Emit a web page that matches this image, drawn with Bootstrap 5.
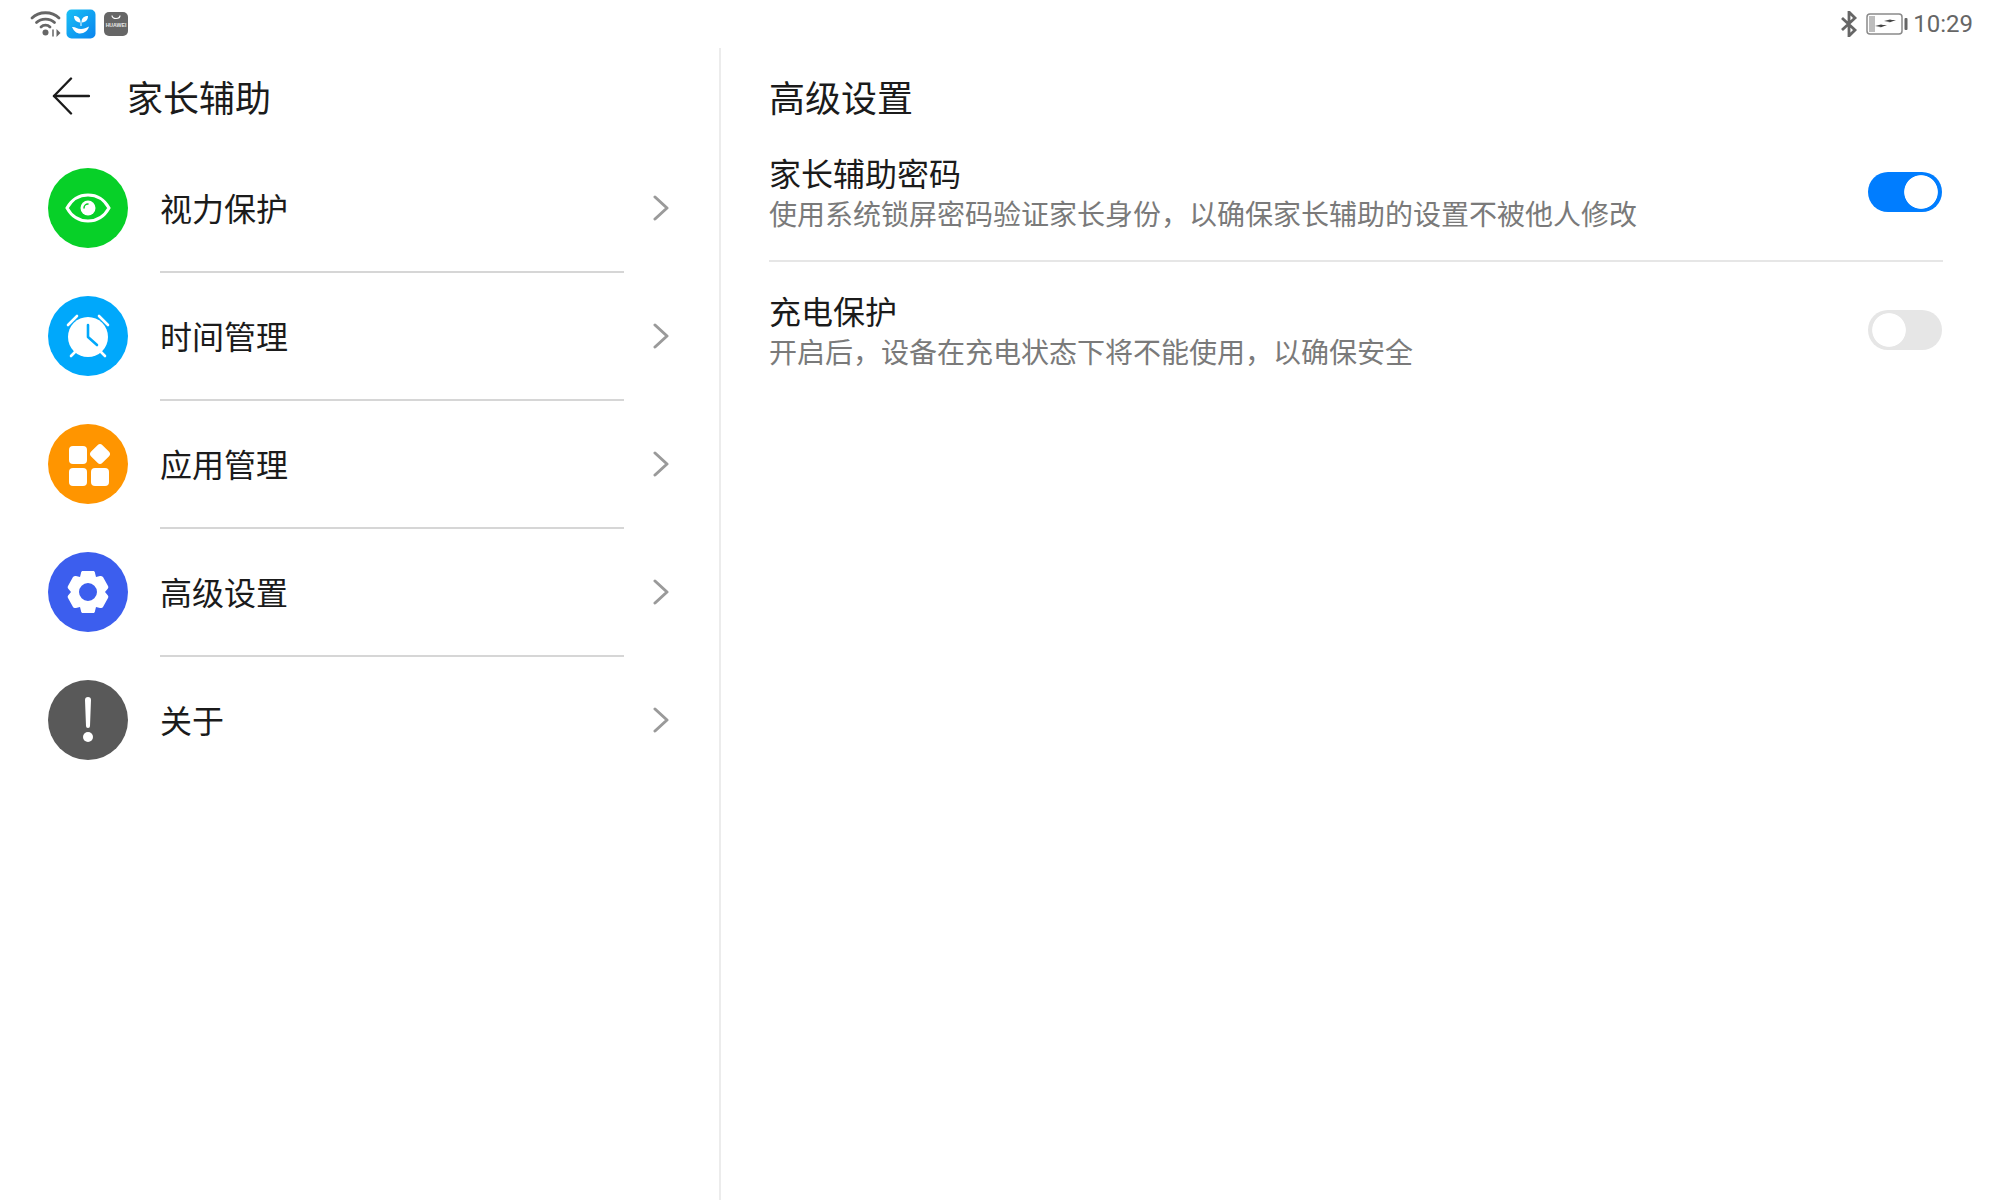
<!DOCTYPE html>
<html lang="zh-CN">
<head>
<meta charset="utf-8">
<title>家长辅助</title>
<link href="https://cdn.jsdelivr.net/npm/bootstrap@5.3.0/dist/css/bootstrap.min.css" rel="stylesheet">
<style>
html,body{height:100%;}
body{background:#fff;color:#1b1b1b;font-family:"Noto Sans CJK SC","Liberation Sans",sans-serif;overflow:hidden;}
.shell{height:1200px;width:2000px;}
.statusbar{height:48px;padding:0 27px 0 30px;color:#666;}
.clock{font-family:Roboto,sans-serif;font-size:24px;color:#666;line-height:48px;margin-left:5px;}
.panes{height:1152px;}
.pane-left{width:721px;border-right:2px solid #ececec;padding-left:48px;}
.pane-right{padding-left:48px;padding-right:57px;}
.head-row{height:97px;padding-bottom:1px;}
.back-ico{margin-left:4px;margin-right:37px;}
.head-title{font-size:36px;line-height:1;color:#1b1b1b;}
.menu-row{height:128px;align-items:flex-start;}
.menu-disc{width:80px;height:80px;border-radius:50%;flex:none;margin-top:23px;}
.disc-green{background:#07d028;}
.disc-sky{background:#00a8fb;}
.disc-amber{background:#ff9500;}
.disc-indigo{background:#3c5eee;}
.disc-slate{background:#595959;}
.menu-body{margin-left:32px;margin-right:29px;width:464px;border-bottom:2px solid #d6d6d6;height:128px;font-size:32px;line-height:1;}
.menu-row:last-child .menu-body{border-bottom:0;}
.chev{margin-top:50px;}
.menu-label{line-height:124px;height:124px;}
.set-row{border-bottom:2px solid #e6e6e6;}
.row-one{height:117px;padding-top:7px;}
.row-two{height:138px;padding-top:28px;border-bottom:0;}
.set-title{font-size:32px;line-height:40px;color:#1b1b1b;}
.set-sub{font-size:28px;line-height:42px;color:#7a7a7a;}
.hw-switch{appearance:none;-webkit-appearance:none;display:block;width:74px;height:40px;border-radius:20px;margin:20px 1px 0 0;border:0;flex:none;}
.hw-switch.is-on{background:radial-gradient(circle 17px at 53px 20px,#fff 16.4px,transparent 17.2px),#007dff;}
.hw-switch.is-off{background:radial-gradient(circle 17px at 21px 20px,#fff 16.4px,transparent 17.2px),#e6e6e6;}
</style>
</head>
<body>
<div class="shell d-flex flex-column">
  <div class="statusbar d-flex align-items-center justify-content-between">
    <div class="d-flex align-items-center">
      <svg width="32" height="28" viewBox="0 0 32 28" fill="none" stroke="#666" stroke-width="2.8" stroke-linecap="round">
        <path d="M2 8C9 1 22 1 29 8"/><path d="M6.500 12.500C11 8 20 8 24.500 12.500"/><path d="M11 17C13.500 14.500 17.500 14.500 20 17"/>
        <circle cx="15.500" cy="22.500" r="3" fill="#666" stroke="none"/>
        <path d="M23 20v6" stroke-width="1.500"/><path d="M26.500 19v8l4-4z" fill="#666" stroke="none"/>
      </svg>
      <svg class="ms-1" width="30" height="30" viewBox="0 0 30 30">
        <defs><linearGradient id="blu" x1="0" y1="0" x2="1" y2="1"><stop offset="0" stop-color="#19c0f5"/><stop offset="1" stop-color="#0a84ee"/></linearGradient></defs>
        <rect width="29" height="29" x="0.500" y="0.500" rx="5" fill="url(#blu)"/>
        <path d="M8 7c3.500 0 6 1.500 6.500 5.500V17h1v-4.500C16 8.500 18.500 7 22 7c0 3.500-2 6-6 6.500h-2C10 13 8 10.500 8 7z" fill="#fff"/>
        <path d="M6 18c3-.500 5 2 9 2 3 0 5-1 8-2.500-1 4-4.500 7-9 7-3 0-6-2-8-6.500z" fill="#fff"/>
      </svg>
      <svg class="ms-2" width="24" height="24" viewBox="0 0 24 24">
        <rect width="24" height="24" rx="5" fill="#666"/>
        <path d="M8 3.500c0 4 8 4 8 0" fill="none" stroke="#fff" stroke-width="1.200"/>
        <text x="12" y="15" text-anchor="middle" font-family="Liberation Sans, sans-serif" font-size="5.200" font-weight="700" fill="#e8e8e8">HUAWEI</text>
      </svg>
    </div>
    <div class="d-flex align-items-center">
      <svg width="18" height="26" viewBox="0 0 18 26" fill="none" stroke="#666" stroke-width="2.800" class="me-2">
        <path d="M2 7l13 12-6 6V1l6 6L2 19"/>
      </svg>
      <svg width="42" height="22" viewBox="0 0 42 22" fill="none">
        <rect x="1" y="1" width="35" height="20" rx="3" stroke="#8a8a8a" stroke-width="1.500"/>
        <rect x="3" y="3" width="6" height="16" fill="#bdbdbd"/>
        <rect x="38.500" y="5" width="3" height="12" rx="1" fill="#666"/>
        <path d="M9 13l8-2-2 1 6 0-8 3 2-1z M18 8l8-2-2 1 6 0-8 3 2-1z" fill="#444"/>
      </svg>
      <span class="clock">10:29</span>
    </div>
  </div>
  <div class="panes d-flex flex-grow-1">
    <div class="pane-left flex-shrink-0">
      <div class="head-row d-flex align-items-center">
        <svg class="back-ico" width="38" height="38" viewBox="0 0 38 38" fill="none" stroke="#1b1b1b" stroke-width="2.400" stroke-linecap="round" stroke-linejoin="round">
          <path d="M37 19H2"/><path d="M19 1.500L2 19l17 17.500"/>
        </svg>
        <span class="head-title">家长辅助</span>
      </div>
      <div>
        <div class="menu-row d-flex">
          <div class="menu-disc disc-green d-flex align-items-center justify-content-center">
            <svg width="46" height="30" viewBox="0 0 46 30" fill="none">
              <path d="M2 15C7 6 14 2 23 2s16 4 21 13c-5 9-12 13-21 13S7 24 2 15z" stroke="#fff" stroke-width="3"/>
              <circle cx="23" cy="15" r="7.500" fill="#fff"/>
              <path d="M19 15a4 4 0 0 1 4-4" stroke="#07d028" stroke-width="1.500" stroke-linecap="round"/>
            </svg>
          </div>
          <div class="menu-body"><div class="menu-label">视力保护</div></div>
          <svg class="chev" width="16" height="26" viewBox="0 0 16 26" fill="none" stroke="#9a9a9a" stroke-width="3" stroke-linecap="round" stroke-linejoin="round"><path d="M2 2l12 11L2 24"/></svg>
        </div>
        <div class="menu-row d-flex">
          <div class="menu-disc disc-sky d-flex align-items-center justify-content-center">
            <svg width="48" height="48" viewBox="0 0 48 48" fill="none">
              <circle cx="24" cy="25" r="20" fill="#fff"/>
              <path d="M24 13v12l9 8" stroke="#00a8fb" stroke-width="2.600" stroke-linecap="round" stroke-linejoin="round"/>
              <path d="M4 13l9-9M44 13l-9-9" stroke="#fff" stroke-width="2.600" stroke-linecap="round"/>
              <path d="M7 44l4-4M41 44l-4-4" stroke="#fff" stroke-width="2.600" stroke-linecap="round"/>
            </svg>
          </div>
          <div class="menu-body"><div class="menu-label">时间管理</div></div>
          <svg class="chev" width="16" height="26" viewBox="0 0 16 26" fill="none" stroke="#9a9a9a" stroke-width="3" stroke-linecap="round" stroke-linejoin="round"><path d="M2 2l12 11L2 24"/></svg>
        </div>
        <div class="menu-row d-flex">
          <div class="menu-disc disc-amber d-flex align-items-center justify-content-center">
            <svg width="46" height="46" viewBox="0 0 46 46" fill="#fff">
              <g transform="translate(1 2)">
                <rect x="3" y="3" width="18" height="18" rx="4"/>
                <rect x="3" y="25" width="18" height="18" rx="4"/>
                <rect x="25" y="25" width="18" height="18" rx="4"/>
                <rect x="26" y="3" width="16" height="16" rx="3.500" transform="rotate(45 34 11)"/>
              </g>
            </svg>
          </div>
          <div class="menu-body"><div class="menu-label">应用管理</div></div>
          <svg class="chev" width="16" height="26" viewBox="0 0 16 26" fill="none" stroke="#9a9a9a" stroke-width="3" stroke-linecap="round" stroke-linejoin="round"><path d="M2 2l12 11L2 24"/></svg>
        </div>
        <div class="menu-row d-flex">
          <div class="menu-disc disc-indigo d-flex align-items-center justify-content-center">
            <svg width="44" height="44" viewBox="0 0 44 44">
              <path fill="#fff" fill-rule="evenodd" d="M17 1h10c1 0 2 .500 2 2l1 4 4-1c1-.300 2 0 3 1l5 9c.500 1 .500 2-.500 3L39 22l2.500 3c1 1 1 2 .500 3l-5 9c-.500 1-2 1.300-3 1l-4-1-1 4c0 1.500-1 2-2 2H17c-1 0-2-.500-2-2l-1-4-4 1c-1 .300-2.500 0-3-1l-5-9c-.500-1-.500-2 .500-3L5 22l-2.500-3c-1-1-1-2-.500-3l5-9c1-1 2-1.300 3-1l4 1 1-4c0-1.500 1-2 2-2z M22 13a9 9 0 1 0 0 18a9 9 0 1 0 0-18z"/>
            </svg>
          </div>
          <div class="menu-body"><div class="menu-label">高级设置</div></div>
          <svg class="chev" width="16" height="26" viewBox="0 0 16 26" fill="none" stroke="#9a9a9a" stroke-width="3" stroke-linecap="round" stroke-linejoin="round"><path d="M2 2l12 11L2 24"/></svg>
        </div>
        <div class="menu-row d-flex">
          <div class="menu-disc disc-slate d-flex align-items-center justify-content-center">
            <svg width="12" height="46" viewBox="0 0 12 46" fill="#fff">
              <path d="M3 3a3 3 0 0 1 6 0l-1 26a2 2 0 0 1-4 0z"/>
              <circle cx="6" cy="40" r="5"/>
            </svg>
          </div>
          <div class="menu-body"><div class="menu-label">关于</div></div>
          <svg class="chev" width="16" height="26" viewBox="0 0 16 26" fill="none" stroke="#9a9a9a" stroke-width="3" stroke-linecap="round" stroke-linejoin="round"><path d="M2 2l12 11L2 24"/></svg>
        </div>
      </div>
    </div>
    <div class="pane-right flex-grow-1">
      <div class="head-row d-flex align-items-center"><span class="head-title">高级设置</span></div>
      <div class="set-row row-one d-flex align-items-start justify-content-between">
        <div>
          <div class="set-title">家长辅助密码</div>
          <div class="set-sub">使用系统锁屏密码验证家长身份，以确保家长辅助的设置不被他人修改</div>
        </div>
        <input class="hw-switch is-on" type="checkbox" checked aria-label="家长辅助密码">
      </div>
      <div class="set-row row-two d-flex align-items-start justify-content-between">
        <div>
          <div class="set-title">充电保护</div>
          <div class="set-sub">开启后，设备在充电状态下将不能使用，以确保安全</div>
        </div>
        <input class="hw-switch is-off" type="checkbox" aria-label="充电保护">
      </div>
    </div>
  </div>
</div>
<script src="https://cdn.jsdelivr.net/npm/bootstrap@5.3.0/dist/js/bootstrap.bundle.min.js"></script>
</body>
</html>
